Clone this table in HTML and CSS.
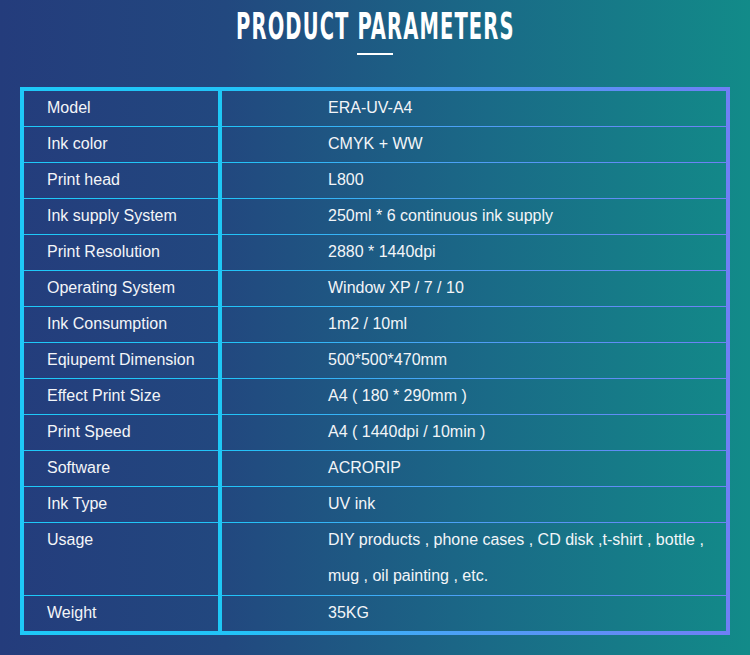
FILE: index.html
```html
<!DOCTYPE html>
<html>
<head>
<meta charset="utf-8">
<link rel="stylesheet" href="styles.css">
</head>
<body>
<div class="page">
  <header class="head">
    <h1 class="title"><span>PRODUCT PARAMETERS</span></h1>
    <div class="bar"></div>
  </header>
  <div class="table">
    <div class="row"><div class="k">Model</div><div class="v">ERA-UV-A4</div></div>
    <div class="row"><div class="k">Ink color</div><div class="v">CMYK + WW</div></div>
    <div class="row"><div class="k">Print head</div><div class="v">L800</div></div>
    <div class="row"><div class="k">Ink supply System</div><div class="v">250ml * 6 continuous ink supply</div></div>
    <div class="row"><div class="k">Print Resolution</div><div class="v">2880 * 1440dpi</div></div>
    <div class="row"><div class="k">Operating System</div><div class="v">Window XP / 7 / 10</div></div>
    <div class="row"><div class="k">Ink Consumption</div><div class="v">1m2 / 10ml</div></div>
    <div class="row"><div class="k">Eqiupemt Dimension</div><div class="v">500*500*470mm</div></div>
    <div class="row"><div class="k">Effect Print Size</div><div class="v">A4 ( 180 * 290mm )</div></div>
    <div class="row"><div class="k">Print Speed</div><div class="v">A4 ( 1440dpi / 10min )</div></div>
    <div class="row"><div class="k">Software</div><div class="v">ACRORIP</div></div>
    <div class="row"><div class="k">Ink Type</div><div class="v">UV ink</div></div>
    <div class="row tall"><div class="k">Usage</div><div class="v">DIY products , phone cases , CD disk ,t-shirt , bottle ,<br>mug , oil painting , etc.</div></div>
    <div class="row last"><div class="k">Weight</div><div class="v">35KG</div></div>
  </div>
</div>
</body>
</html>
```
FILE: styles.css
```css
html, body {
  margin: 0;
  padding: 0;
}
body {
  width: 750px;
  height: 655px;
  overflow: hidden;
  background: linear-gradient(90deg, #243c7c 0%, #22487f 30%, #1a6a87 65%, #128b89 100%);
  font-family: "Liberation Sans", Arial, sans-serif;
  color: #f3f5f8;
}
.page {
  padding: 0 20px;
}
.head {
  height: 87px;
  display: flex;
  flex-direction: column;
  align-items: center;
}
.title {
  margin: 0;
  padding-top: 6px;
  height: 40px;
  font-family: "Liberation Sans Narrow", "DejaVu Sans Condensed", sans-serif;
  font-weight: bold;
  font-size: 38px;
  line-height: 40px;
  color: #ffffff;
  white-space: nowrap;
  display: flex;
  justify-content: center;
}
.title span {
  display: inline-block;
  transform: scaleX(0.57);
  letter-spacing: 2px;
}
.bar {
  margin-top: 7px;
  width: 36px;
  height: 2px;
  background: #ffffff;
}
.table {
  border: 4px solid;
  border-image: linear-gradient(90deg, #1ec9f8 0%, #22c3f8 30%, #4aa2f6 60%, #6f7ff5 100%) 1;
  font-size: 16px;
}
.row {
  display: grid;
  grid-template-columns: 198px 1fr;
  border-bottom: 1px solid;
  border-image: linear-gradient(90deg, #1ec9f8 0%, #22c3f8 30%, #4aa2f6 60%, #6f7ff5 100%) 1;
}
.row.last {
  border-bottom: none;
}
.k {
  padding-left: 23px;
  line-height: 34px;
  padding-bottom: 1px;
  border-right: 4px solid #1ec8f6;
}
.v {
  padding-left: 106px;
  line-height: 34px;
  padding-bottom: 1px;
}
.tall .v {
  line-height: 36px;
  padding-bottom: 0;
  margin-top: -1px;
  margin-bottom: 1px;
}
```
